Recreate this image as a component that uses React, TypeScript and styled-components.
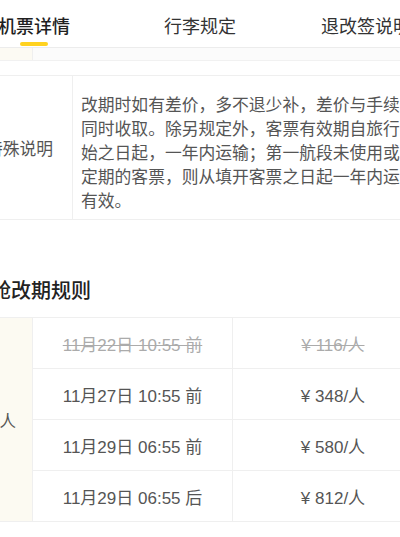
import React from 'react';
import styled, { createGlobalStyle } from 'styled-components';

const GlobalStyle = createGlobalStyle`
  html, body {
    margin: 0;
    padding: 0;
    background: #ffffff;
    overflow: hidden;
  }
  body {
    font-family: "Noto Sans CJK SC", "Noto Sans", "Liberation Sans", sans-serif;
    color: #555;
  }
`;

const Page = styled.div`
  width: 498px;
  margin-left: -49px;
`;

const TabBar = styled.div`
  display: grid;
  grid-template-columns: repeat(3, 1fr);
  height: 47px;
  border-bottom: 1px solid #ececec;
`;

const Tab = styled.div<{ $active?: boolean }>`
  position: relative;
  display: flex;
  align-items: center;
  justify-content: center;
  padding-top: 3px;
  font-size: 18px;
  font-weight: ${(p) => (p.$active ? 500 : 400)};
  color: ${(p) => (p.$active ? '#1f1f1f' : '#333')};

  &::after {
    content: '';
    display: ${(p) => (p.$active ? 'block' : 'none')};
    position: absolute;
    left: 50%;
    bottom: 1px;
    width: 28px;
    height: 4px;
    margin-left: -14px;
    border-radius: 2px;
    background: #ffd21f;
  }
`;

const PrevRow = styled.div`
  display: grid;
  grid-template-columns: 66px 1fr;
  height: 12px;
  margin: 0 16px;
  border-bottom: 1px solid #f1f1f1;
  background: #fbfbfb;
`;

const PrevLabel = styled.div`
  background: #fcfaf3;
  border-right: 1px solid #efefef;
`;

const NoteTable = styled.div`
  display: grid;
  grid-template-columns: 106px 1fr;
  margin: 14px 16px 0;
  border-top: 1px solid #efefef;
  border-bottom: 1px solid #efefef;
`;

const NoteLabel = styled.div`
  display: flex;
  align-items: center;
  justify-content: center;
  font-size: 16.8px;
  color: #555;
  border-right: 1px solid #efefef;
`;

const NoteText = styled.div`
  width: 337px;
  padding: 16px 8px 7px 8px;
  font-size: 16.8px;
  line-height: 24px;
  color: #555;
`;

const SectionTitle = styled.div`
  margin: 56px 0 13px 0;
  font-size: 20px;
  line-height: 28px;
  font-weight: 500;
  color: #222;
`;

const PriceTable = styled.div`
  display: grid;
  grid-template-columns: 66px 200px 1fr;
  grid-auto-rows: 51px;
  margin: 0 16px;
  border-top: 1px solid #efefef;
`;

const PassengerCell = styled.div`
  grid-row: span 4;
  display: flex;
  align-items: center;
  justify-content: center;
  background: #fcfaf2;
  border-right: 1px solid #efefef;
  border-bottom: 1px solid #efefef;
  font-size: 16.5px;
  color: #555;
`;

const Cell = styled.div<{ $expired?: boolean; $divider?: boolean }>`
  display: flex;
  align-items: center;
  justify-content: center;
  font-family: "Liberation Sans", "Noto Sans CJK SC", sans-serif;
  font-size: 17px;
  color: ${(p) => (p.$expired ? '#ababab' : '#555')};
  text-decoration: ${(p) => (p.$expired ? 'line-through' : 'none')};
  border-bottom: 1px solid #efefef;
  border-right: ${(p) => (p.$divider ? '1px solid #efefef' : 'none')};
  white-space: pre;
`;

const rules = [
  { time: '11月22日 10:55 前', price: '¥ 116/人', expired: true },
  { time: '11月27日 10:55 前', price: '¥ 348/人', expired: false },
  { time: '11月29日 06:55 前', price: '¥ 580/人', expired: false },
  { time: '11月29日 06:55 后', price: '¥ 812/人', expired: false },
];

const App: React.FC = () => {
  return (
    <>
      <GlobalStyle />
      <Page>
        <TabBar>
          <Tab $active>机票详情</Tab>
          <Tab>行李规定</Tab>
          <Tab>退改签说明</Tab>
        </TabBar>
        <PrevRow>
          <PrevLabel />
          <div />
        </PrevRow>
        <NoteTable>
          <NoteLabel>特殊说明</NoteLabel>
          <NoteText>
            改期时如有差价，多不退少补，差价与手续费同时收取。除另规定外，客票有效期自旅行开始之日起，一年内运输；第一航段未使用或不定期的客票，则从填开客票之日起一年内运输有效。
          </NoteText>
        </NoteTable>
        <SectionTitle>经济舱改期规则</SectionTitle>
        <PriceTable>
          <PassengerCell>成人</PassengerCell>
          {rules.map((r) => (
            <React.Fragment key={r.time}>
              <Cell $expired={r.expired} $divider>
                {r.time}
              </Cell>
              <Cell $expired={r.expired}>{r.price}</Cell>
            </React.Fragment>
          ))}
        </PriceTable>
      </Page>
    </>
  );
};

export default App;
